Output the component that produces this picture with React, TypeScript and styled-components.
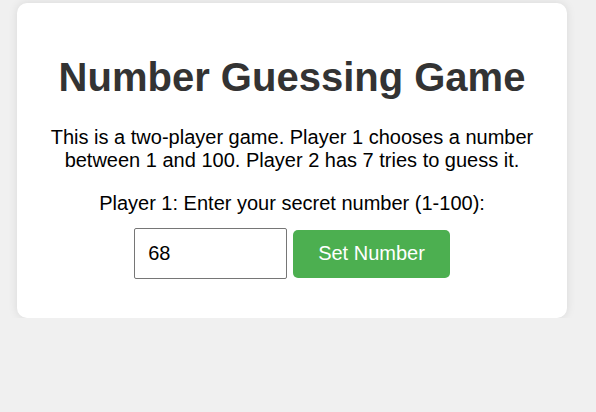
import React, { useState } from "react";
import styled, { createGlobalStyle } from "styled-components";

const GlobalStyle = createGlobalStyle`
  html, body {
    margin: 0;
    padding: 0;
    background: #f0f0f0;
    font-family: "Liberation Sans", Arial, sans-serif;
  }
`;

const Page = styled.div`
  padding: 3px 0 0 17px;
`;

const Card = styled.div`
  box-sizing: border-box;
  width: 550px;
  padding: 24px 20px 24px;
  background: #ffffff;
  border-radius: 10px;
  box-shadow: 0 0 10px rgba(0, 0, 0, 0.1);
  text-align: center;
`;

const Title = styled.h1`
  margin: 27px 0 26px;
  font-size: 40px;
  font-weight: bold;
  line-height: 46px;
  color: #333333;
`;

const Text = styled.p<{ $gapBelow?: number }>`
  margin: 0 0 ${(p) => (p.$gapBelow ?? 20)}px;
  font-size: 20px;
  line-height: 23px;
  color: #000000;
`;

const Row = styled.div`
  display: flex;
  justify-content: center;
  align-items: center;
  gap: 6px;
  margin-bottom: 15px;
`;

const NumberInput = styled.input`
  box-sizing: border-box;
  width: 153px;
  height: 51px;
  padding: 0 13px;
  border: 1px solid #767676;
  border-radius: 2px;
  font-family: "Liberation Sans", Arial, sans-serif;
  font-size: 20px;
  color: #000000;
  background: #ffffff;
  outline: none;
`;

const Button = styled.button`
  box-sizing: border-box;
  height: 48px;
  padding: 0 25px;
  border: none;
  border-radius: 5px;
  background: #4caf50;
  color: #ffffff;
  font-family: "Liberation Sans", Arial, sans-serif;
  font-size: 20px;
  line-height: 23px;
  cursor: pointer;
`;

export default function App() {
  const [value, setValue] = useState("68");
  return (
    <>
      <GlobalStyle />
      <Page>
        <Card>
          <Title>Number Guessing Game</Title>
          <Text>
            This is a two-player game. Player 1 chooses a number between 1 and
            100. Player 2 has 7 tries to guess it.
          </Text>
          <Text $gapBelow={13}>Player 1: Enter your secret number (1-100):</Text>
          <Row>
            <NumberInput
              type="text"
              value={value}
              onChange={(e) => setValue(e.target.value)}
            />
            <Button>Set Number</Button>
          </Row>
        </Card>
      </Page>
    </>
  );
}
